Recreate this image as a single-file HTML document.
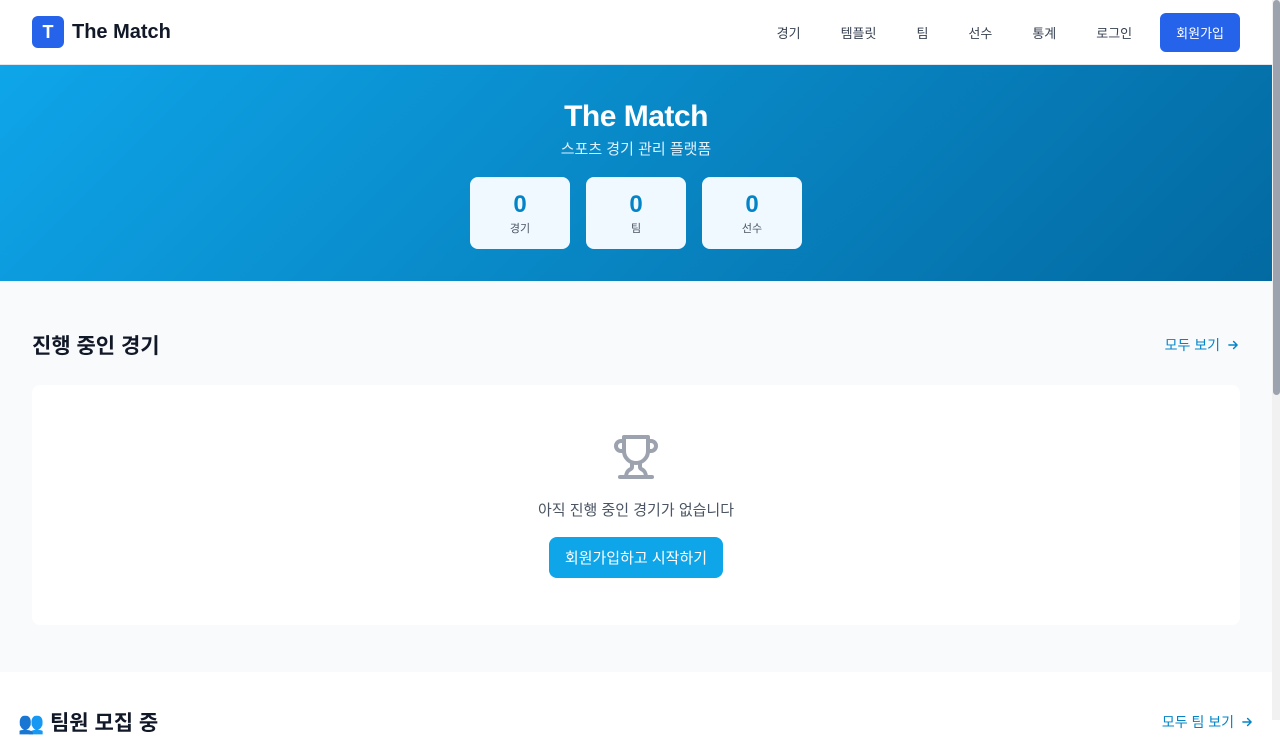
<!DOCTYPE html>
<html><head><meta charset="utf-8"><style>
*{box-sizing:border-box;margin:0;padding:0}
body{width:1280px;height:720px;overflow:hidden;font-family:"Liberation Sans","Noto Sans CJK KR",sans-serif;background:#fff;position:relative}
.wrap{width:1272px;position:absolute;left:0;top:0}
header{height:65px;border-bottom:1px solid #e5e7eb;display:flex;align-items:center;padding:0 32px;background:#fff}
.logo{width:32px;height:32px;background:#2563eb;border-radius:6px;color:#fff;font-weight:700;font-size:18px;display:flex;align-items:center;justify-content:center}
.brand{font-size:20px;font-weight:700;color:#111827;margin-left:8px}
nav{margin-left:auto;display:flex;align-items:center}
nav a{font-size:13px;color:#374151;margin-left:40px}
nav .btn{background:#2563eb;color:#fff;border-radius:6px;padding:10px 16px;margin-left:28px}
.hero{height:216px;background:linear-gradient(135deg,#0ea5e9,#0369a1);text-align:center;color:#fff;padding-top:34px}
.hero h1{font-size:30px;font-weight:700;letter-spacing:-0.5px;line-height:36px}
.hero p{font-size:15px;color:#e0f2fe;margin-top:3px}
.stats{display:flex;justify-content:center;gap:16px;margin-top:18px}
.stat{width:100px;height:72px;background:#f0f9ff;border-radius:8px;padding-top:14px}
.stat b{display:block;font-size:24px;color:#0284c7;line-height:28px}
.stat span{font-size:11px;color:#4b5563}
.sec{background:#f8fafc;height:391px;padding:48px 32px 0}
.sh{display:flex;justify-content:space-between;align-items:center;height:32px}
.sh h2{font-size:21px;font-weight:700;color:#111827}
.sh a{font-size:14px;color:#0284c7;display:flex;align-items:center;gap:6px}
.card{margin-top:24px;height:240px;background:#fff;border-radius:8px;text-align:center;padding-top:48px}
.card p{font-size:15px;color:#4b5563;margin-top:13px}
.card .b{display:inline-block;margin-top:17px;background:#0ea5e9;color:#fff;font-size:15px;padding:10px 16px;border-radius:8px}
.sb{position:absolute;right:0;top:0;width:8px;height:720px;background:#f1f1f1}
.sb div{position:absolute;left:1px;top:0;width:7px;height:395px;background:#9ca3af;border-radius:4px}
</style></head><body>
<div class="wrap">
<header><div class="logo">T</div><div class="brand">The Match</div>
<nav><a>경기</a><a>템플릿</a><a>팀</a><a>선수</a><a>통계</a><a>로그인</a><a class="btn">회원가입</a></nav></header>
<div class="hero"><h1>The Match</h1><p>스포츠 경기 관리 플랫폼</p>
<div class="stats"><div class="stat"><b>0</b><span>경기</span></div><div class="stat"><b>0</b><span>팀</span></div><div class="stat"><b>0</b><span>선수</span></div></div></div>
<div class="sec"><div class="sh"><h2>진행 중인 경기</h2><a>모두 보기 <svg width="14" height="14" viewBox="0 0 24 24" fill="none" stroke="#0284c7" stroke-width="2.5" stroke-linecap="round" stroke-linejoin="round"><path d="M5 12h14M13 6l6 6-6 6"/></svg></a></div>
<div class="card"><svg width="48" height="48" viewBox="0 0 24 24" fill="none" stroke="#9ca3af" stroke-width="2" stroke-linecap="round" stroke-linejoin="round"><path d="M6 9H4.5a2.5 2.5 0 0 1 0-5H6"/><path d="M18 9h1.5a2.5 2.5 0 0 0 0-5H18"/><path d="M4 22h16"/><path d="M10 14.66V17c0 .55-.47.98-.97 1.21C7.85 18.75 7 20.24 7 22"/><path d="M14 14.66V17c0 .55.47.98.97 1.21C16.15 18.75 17 20.24 17 22"/><path d="M18 2H6v7a6 6 0 0 0 12 0V2Z"/></svg>
<p>아직 진행 중인 경기가 없습니다</p><span class="b">회원가입하고 시작하기</span></div></div>
<div style="padding:35px 18px 0 18px;display:flex;justify-content:space-between;align-items:center"><h2 style="font-size:21px;color:#111827">👥 팀원 모집 중</h2><a style="font-size:14px;color:#0284c7;display:flex;align-items:center;gap:6px">모두 팀 보기 <svg width="14" height="14" viewBox="0 0 24 24" fill="none" stroke="#0284c7" stroke-width="2.5" stroke-linecap="round" stroke-linejoin="round"><path d="M5 12h14M13 6l6 6-6 6"/></svg></a></div>
</div>
<div class="sb"><div></div></div>
</body></html>
